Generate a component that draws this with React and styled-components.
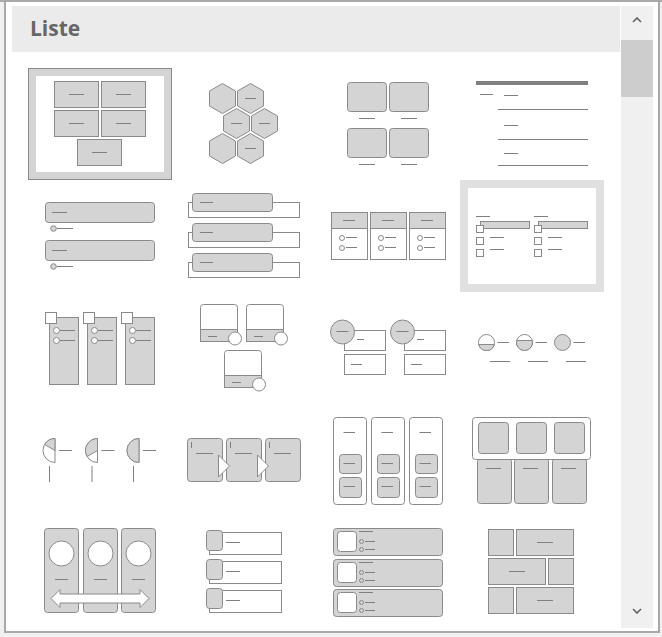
import React from 'react';
import styled, { createGlobalStyle } from 'styled-components';

const GlobalStyle = createGlobalStyle`
  html, body {
    margin: 0;
    padding: 0;
  }
  body {
    background: #f0f0f0;
    border-top: 2px solid #a9a9a9;
    font-family: "Open Sans", "Liberation Sans", sans-serif;
  }
`;

// Window shell
const Window = styled.div`
  box-sizing: border-box;
  width: 656px;
  height: 631px;
  margin-left: 4px;
  background: #fff;
  border: 2px solid #a9a9a9;
  border-top: none;
  padding: 4px 5px 3px 6px;
  display: flex;
  gap: 1px;
`;

const Main = styled.div`
  width: 608px;
  display: flex;
  flex-direction: column;
`;

const Header = styled.div`
  box-sizing: border-box;
  height: 46px;
  background: #ebebeb;
  padding: 12px 0 0 18px;
  font-size: 21px;
  line-height: 20px;
  font-weight: 700;
  color: #666;
`;

const Gallery = styled.div`
  flex: 1;
  overflow: hidden;
  padding: 16px 16px 0;
  display: grid;
  grid-template-columns: repeat(4, 144px);
  grid-auto-rows: 112px;
  align-content: start;
`;

const Cell = styled.div`
  width: 144px;
  height: 112px;
  box-shadow: ${({ $state }) =>
    $state === 'selected'
      ? 'inset 0 0 0 1px #8a8a8a, inset 0 0 0 8px #d4d4d4'
      : $state === 'hover'
      ? 'inset 0 0 0 8px #e0e0e0'
      : 'none'};

  svg {
    display: block;
  }
`;

// Scrollbar
const Scrollbar = styled.div`
  width: 32px;
  background: #f0f0f0;
  display: flex;
  flex-direction: column;
`;

const ArrowButton = styled.div`
  height: ${({ $h }) => $h}px;
  display: flex;
  align-items: center;
  justify-content: center;
  color: #606060;
`;

const Thumb = styled.div`
  margin-top: 6px;
  height: 57px;
  background: #cdcdcd;
`;

const Track = styled.div`
  flex: 1;
`;

const Chevron = ({ down }) => (
  <svg width="10" height="6" viewBox="0 0 10 6">
    <path
      d={down ? 'M1 1 L5 5 L9 1' : 'M1 5 L5 1 L9 5'}
      fill="none"
      stroke="currentColor"
      strokeWidth="1.6"
    />
  </svg>
);

// thumbnail drawing primitives
const S = '#8a8a8a';
const F = '#d4d4d4';
const LN = '#808080';
const W = '#fff';

const Box = ({ x, y, w, h, r = 0, fill = F }) => (
  <rect x={x + 0.5} y={y + 0.5} width={w} height={h} rx={r} fill={fill} stroke={S} />
);
const Dash = ({ x1, x2, y }) => (
  <line x1={x1} x2={x2} y1={y + 0.5} y2={y + 0.5} stroke={LN} />
);
const VDash = ({ x, y1, y2 }) => (
  <line x1={x + 0.5} x2={x + 0.5} y1={y1} y2={y2} stroke={LN} />
);
const Dot = ({ cx, cy, r, fill = W }) => (
  <circle cx={cx} cy={cy} r={r} fill={fill} stroke={S} />
);

const hexPoints = (cx, cy, r = 15) => {
  const hw = r * 0.866;
  return `${cx},${cy - r} ${cx + hw},${cy - r / 2} ${cx + hw},${cy + r / 2} ${cx},${cy + r} ${cx - hw},${cy + r / 2} ${cx - hw},${cy - r / 2}`;
};

const Pie = ({ ex, cy, r = 12, angle }) => {
  const a = ((90 + angle) * Math.PI) / 180;
  const px = ex + r * Math.cos(a);
  const py = cy - r * Math.sin(a);
  return (
    <>
      <path d={`M${ex},${cy - r} A${r},${r} 0 0 0 ${ex},${cy + r} Z`} fill={W} stroke={S} />
      <path d={`M${ex},${cy} L${ex},${cy - r} A${r},${r} 0 0 0 ${px},${py} Z`} fill={F} stroke={S} />
    </>
  );
};

const Gauge = ({ cx, cy, r = 8, d }) => {
  if (d === null) return <Dot cx={cx} cy={cy} r={r} fill={F} />;
  const hw = Math.sqrt(r * r - d * d);
  return (
    <>
      <Dot cx={cx} cy={cy} r={r} />
      <path
        d={`M${cx - hw},${cy + d} A${r},${r} 0 ${d < 0 ? 1 : 0} 0 ${cx + hw},${cy + d} Z`}
        fill={F}
        stroke={S}
      />
    </>
  );
};

// thumbnails
const BlockList = () => (
  <>
    {[[26, 13], [73, 13], [26, 42], [73, 42], [49, 71]].map(([x, y]) => (
      <g key={`${x}-${y}`}>
        <Box x={x} y={y} w={44} h={26} />
        <Dash x1={x + 15} x2={x + 30} y={y + 13} />
      </g>
    ))}
  </>
);

const Hexagons = () => (
  <>
    {[
      [50.5, 30.5, false],
      [78.5, 30.5, true],
      [64.5, 55.5, true],
      [92.5, 55.5, true],
      [50.5, 80.5, false],
      [78.5, 80.5, true],
    ].map(([cx, cy, dash]) => (
      <g key={`${cx}-${cy}`}>
        <polygon points={hexPoints(cx, cy)} fill={F} stroke={W} strokeWidth="3" />
        <polygon points={hexPoints(cx, cy)} fill={F} stroke={S} />
        {dash && <Dash x1={cx - 5.5} x2={cx + 5.5} y={cy - 0.5} />}
      </g>
    ))}
  </>
);

const PictureGrid = () => (
  <>
    {[[31, 14], [73, 14], [31, 60], [73, 60]].map(([x, y]) => (
      <g key={`${x}-${y}`}>
        <Box x={x} y={y} w={39} h={29} r={3} />
        <Dash x1={x + 12} x2={x + 28} y={y + 36} />
      </g>
    ))}
  </>
);

const TitledList = () => (
  <>
    <rect x="16" y="13" width="112" height="4" fill={LN} />
    <Dash x1={20} x2={33} y={26} />
    {[27, 57, 85].map((y) => (
      <Dash key={y} x1={44} x2={58} y={y} />
    ))}
    {[41, 71, 97].map((y) => (
      <Dash key={y} x1={38} x2={128} y={y} />
    ))}
  </>
);

const BulletBars = () => (
  <>
    {[22, 60].map((y) => (
      <g key={y}>
        <Box x={17} y={y} w={109} h={20} r={3} />
        <Dash x1={24} x2={39} y={y + 10} />
        <Dot cx={25.5} cy={y + 26.5} r={2.8} fill={F} />
        <Dash x1={29} x2={45} y={y + 26} />
      </g>
    ))}
  </>
);

const StackedTabs = () => (
  <>
    {[0, 30, 60].map((oy) => (
      <g key={oy}>
        <Box x={16} y={22 + oy} w={111} h={15} fill={W} />
        <Box x={20} y={13 + oy} w={80} h={18} r={3} />
        <Dash x1={28} x2={41} y={22 + oy} />
      </g>
    ))}
  </>
);

const TableColumns = () => (
  <>
    {[15, 54, 93].map((x) => (
      <g key={x}>
        <Box x={x} y={32} w={36} h={47} fill={W} />
        <Box x={x} y={32} w={36} h={16} />
        <Dash x1={x + 12} x2={x + 24} y={40} />
        <Dot cx={x + 11} cy={58} r={2.5} />
        <Dash x1={x + 15} x2={x + 26} y={57} />
        <Dot cx={x + 11} cy={68} r={2.5} />
        <Dash x1={x + 15} x2={x + 26} y={67} />
      </g>
    ))}
  </>
);

const CheckList = () => (
  <>
    {[16, 74].map((x) => (
      <g key={x}>
        <Dash x1={x} x2={x + 14} y={36} />
        <Box x={x + 4} y={41} w={49} h={7} />
        <Box x={x} y={45} w={7} h={7} fill={W} />
        <Box x={x} y={57} w={7} h={7} fill={W} />
        <Dash x1={x + 14} x2={x + 28} y={57} />
        <Box x={x} y={69} w={7} h={7} fill={W} />
        <Dash x1={x + 14} x2={x + 28} y={69} />
      </g>
    ))}
  </>
);

const TabColumns = () => (
  <>
    {[21, 59, 97].map((x) => (
      <g key={x}>
        <Box x={x} y={25} w={29} h={67} />
        <Box x={x - 4} y={20} w={11} h={11} fill={W} />
        <Dot cx={x + 7.5} cy={38.5} r={3} />
        <Dash x1={x + 11} x2={x + 26} y={38} />
        <Dot cx={x + 7.5} cy={48.5} r={3} />
        <Dash x1={x + 11} x2={x + 26} y={48} />
      </g>
    ))}
  </>
);

const CaptionCards = () => (
  <>
    {[[28, 12], [74, 12], [52, 58]].map(([x, y]) => (
      <g key={`${x}-${y}`}>
        <Box x={x} y={y} w={37} h={37} r={3} fill={W} />
        <Box x={x} y={y + 25} w={37} h={12} />
        <Dash x1={x + 8} x2={x + 17} y={y + 32} />
        <Dot cx={x + 35} cy={y + 34.5} r={6.5} />
      </g>
    ))}
  </>
);

const CircleBoxes = () => (
  <>
    {[28, 88].map((x) => (
      <g key={x}>
        <Box x={x} y={38} w={41} h={20} fill={W} />
        <Dash x1={x + 13} x2={x + 20} y={47} />
        <Box x={x} y={62} w={41} h={20} fill={W} />
        <Dash x1={x + 7} x2={x + 18} y={72} />
        <Dot cx={x - 1.5} cy={40} r={12} fill={F} />
        <Dash x1={x - 7.5} x2={x + 4.5} y={39} />
      </g>
    ))}
  </>
);

const Gauges = () => (
  <>
    {[[26.5, 2], [64.5, -2], [102.5, null]].map(([cx, d]) => (
      <g key={cx}>
        <Gauge cx={cx} cy={50.5} d={d} />
        <Dash x1={cx + 11} x2={cx + 22.5} y={50} />
        <Dash x1={cx + 3.5} x2={cx + 23.5} y={69} />
      </g>
    ))}
  </>
);

const Pies = () => (
  <>
    {[[27, 60], [69.5, 120], [111, 180]].map(([ex, angle]) => (
      <g key={ex}>
        <Pie ex={ex} cy={46.5} angle={angle} />
        <Dash x1={ex + 4} x2={ex + 17} y={46} />
        <VDash x={ex - 6} y1={62} y2={78} />
      </g>
    ))}
  </>
);

const ArrowSteps = () => (
  <>
    {[15, 54, 93].map((x) => (
      <g key={x}>
        <Box x={x} y={34} w={35} h={43} r={3} />
        <VDash x={x + 4} y1={38} y2={44} />
        <Dash x1={x + 9} x2={x + 26} y={49} />
      </g>
    ))}
    {[15, 54].map((x) => (
      <polygon
        key={x}
        points={`${x + 31.5},${51} ${x + 42.5},${62} ${x + 31.5},${73}`}
        fill={W}
        stroke={S}
      />
    ))}
  </>
);

const VerticalGroups = () => (
  <>
    {[17, 55, 93].map((x) => (
      <g key={x}>
        <Box x={x} y={13} w={33} h={87} r={3} fill={W} />
        <Dash x1={x + 10.5} x2={x + 22} y={28} />
        <Box x={x + 6} y={50} w={22} h={19} r={3} />
        <Dash x1={x + 10.5} x2={x + 22} y={59} />
        <Box x={x + 6} y={73} w={22} h={20} r={3} />
        <Dash x1={x + 10.5} x2={x + 22} y={82} />
      </g>
    ))}
  </>
);

const GroupedColumns = () => (
  <>
    {[17, 54, 92].map((x) => (
      <g key={x}>
        <Box x={x} y={54} w={34} h={45} r={3} />
        <Dash x1={x + 9} x2={x + 24} y={64} />
      </g>
    ))}
    <Box x={12} y={13} w={118} h={42} r={3} fill={W} />
    {[18, 56, 94].map((x) => (
      <Box key={x} x={x} y={18} w={30} h={31} r={3} />
    ))}
  </>
);

const CircleColumns = () => (
  <>
    {[16, 55, 93].map((x) => (
      <g key={x}>
        <Box x={x} y={12} w={34} h={84} r={3} />
        <Dot cx={x + 17.5} cy={37.5} r={12.5} />
        <Dash x1={x + 11} x2={x + 24} y={63} />
      </g>
    ))}
    <polygon
      points="23,82.5 32,73.5 32,78 112,78 112,73.5 121,82.5 112,91.5 112,87 32,87 32,91.5"
      fill={W}
      stroke={S}
    />
  </>
);

const SquareTabs = () => (
  <>
    {[0, 29, 58].map((oy) => (
      <g key={oy}>
        <Box x={37} y={16 + oy} w={72} h={22} fill={W} />
        <Box x={34} y={14 + oy} w={16} h={20} r={3} />
        <Dash x1={54} x2={68} y={26 + oy} />
      </g>
    ))}
  </>
);

const PictureBullets = () => (
  <>
    {[0, 31, 61].map((oy) => (
      <g key={oy}>
        <Box x={17} y={12 + oy} w={109} h={27} r={3} />
        <Box x={21} y={15 + oy} w={19} h={20} r={3} fill={W} />
        <Dash x1={43} x2={57} y={15 + oy} />
        <Dot cx={45.5} cy={25.5 + oy} r={2} fill={F} />
        <Dash x1={49} x2={59} y={25 + oy} />
        <Dot cx={45.5} cy={33.5 + oy} r={2} fill={F} />
        <Dash x1={49} x2={59} y={33 + oy} />
      </g>
    ))}
  </>
);

const Bricks = () => (
  <>
    <Box x={28} y={13} w={25} h={26} />
    <Box x={56} y={13} w={57} h={26} />
    <Dash x1={77} x2={93} y={26} />
    <Box x={28} y={42} w={57} h={26} />
    <Box x={88} y={42} w={25} h={26} />
    <Dash x1={49} x2={65} y={55} />
    <Box x={28} y={71} w={25} h={26} />
    <Box x={56} y={71} w={57} h={26} />
    <Dash x1={77} x2={93} y={84} />
  </>
);

const layouts = [
  { id: 'block', Art: BlockList, state: 'selected' },
  { id: 'hex', Art: Hexagons },
  { id: 'pictures', Art: PictureGrid },
  { id: 'titled', Art: TitledList },
  { id: 'bullets', Art: BulletBars },
  { id: 'stacked', Art: StackedTabs },
  { id: 'table', Art: TableColumns },
  { id: 'check', Art: CheckList, state: 'hover' },
  { id: 'tabcols', Art: TabColumns },
  { id: 'cards', Art: CaptionCards },
  { id: 'circleboxes', Art: CircleBoxes },
  { id: 'gauges', Art: Gauges },
  { id: 'pies', Art: Pies },
  { id: 'arrows', Art: ArrowSteps },
  { id: 'vgroups', Art: VerticalGroups },
  { id: 'grouped', Art: GroupedColumns },
  { id: 'circlecols', Art: CircleColumns },
  { id: 'squaretabs', Art: SquareTabs },
  { id: 'picbullets', Art: PictureBullets },
  { id: 'bricks', Art: Bricks },
];

const App = () => (
  <>
    <GlobalStyle />
    <Window>
      <Main>
        <Header>Liste</Header>
        <Gallery>
          {layouts.map(({ id, Art, state }) => (
            <Cell key={id} $state={state}>
              <svg width="144" height="112" viewBox="0 0 144 112">
                <Art />
              </svg>
            </Cell>
          ))}
        </Gallery>
      </Main>
      <Scrollbar>
        <ArrowButton $h={28}>
          <Chevron />
        </ArrowButton>
        <Thumb />
        <Track />
        <ArrowButton $h={34}>
          <Chevron down />
        </ArrowButton>
      </Scrollbar>
    </Window>
  </>
);

export default App;
